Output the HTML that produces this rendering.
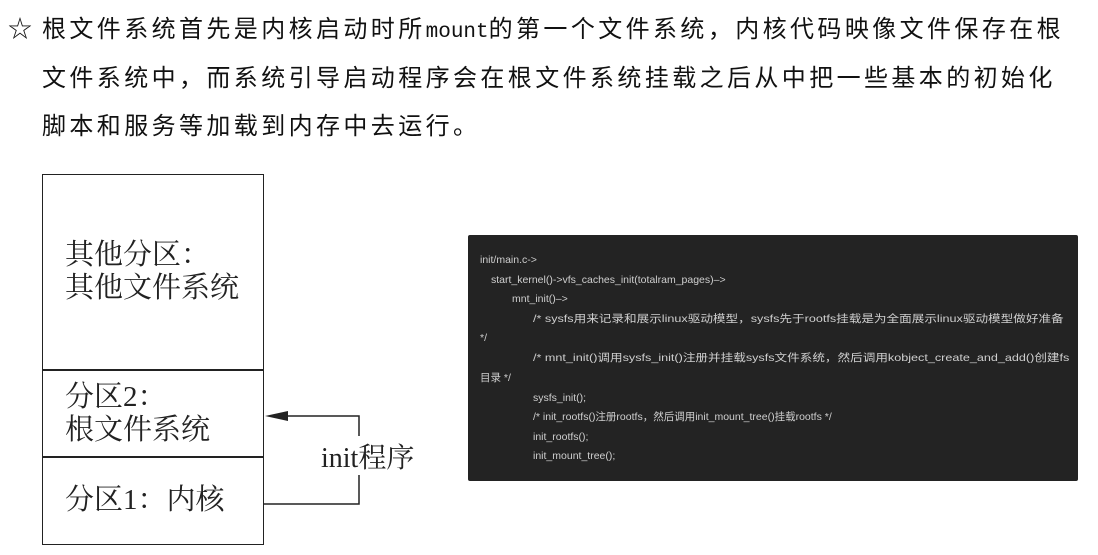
<!DOCTYPE html>
<html><head><meta charset="utf-8"><style>
body{margin:0;width:1098px;height:555px;background:#fff;position:relative;overflow:hidden;font-family:"Liberation Sans","Noto Sans CJK SC",sans-serif}
.t{position:absolute;left:42px;font-size:24px;letter-spacing:3.4px;color:#111;white-space:nowrap;line-height:30px}
.m{font-family:"Liberation Mono","DejaVu Sans Mono",monospace;letter-spacing:0;font-size:21px}
.s{position:absolute;font-family:"Liberation Serif","Noto Serif CJK SC",serif;font-size:29px;color:#222;white-space:nowrap;line-height:33px}
.code{position:absolute;left:468px;top:235px;width:610px;height:246px;background:#232323;border-radius:2px}
.c{position:absolute;font-size:10.5px;color:#cfcfcf;white-space:nowrap;line-height:14px}
.w{transform:scaleX(1.2);transform-origin:0 0}
.ln{position:absolute;background:#222}
</style></head><body>
<div class="t" style="left:8px;top:15px">☆</div>
<div class="t" style="top:15px">根文件系统首先是内核启动时所<span class="m">mount</span>的第一个文件系统，内核代码映像文件保存在根</div>
<div class="t" style="top:64px">文件系统中，而系统引导启动程序会在根文件系统挂载之后从中把一些基本的初始化</div>
<div class="t" style="top:112px">脚本和服务等加载到内存中去运行。</div>

<div style="position:absolute;left:42px;top:174px;width:220px;height:369px;border:1.5px solid #222"></div>
<div class="ln" style="left:42px;top:369px;width:222px;height:1.5px"></div>
<div class="ln" style="left:42px;top:456px;width:222px;height:1.5px"></div>
<div class="s" style="left:65px;top:239px">其他分区：<br>其他文件系统</div>
<div class="s" style="left:65px;top:381px">分区2：<br>根文件系统</div>
<div class="s" style="left:65px;top:484px">分区1：内核</div>
<svg style="position:absolute;left:0;top:0" width="1098" height="555">
<polyline points="280,416 359,416 359,436" fill="none" stroke="#222" stroke-width="1.5"/>
<polyline points="359,475 359,504 264,504" fill="none" stroke="#222" stroke-width="1.5"/>
<polygon points="265,416 288,411 288,421" fill="#222"/>
</svg>
<div class="s" style="left:321px;top:442px;font-size:28px">init程序</div>

<div class="code">
<div class="c" style="left:12px;top:18px">init/main.c-&gt;</div>
<div class="c" style="left:23px;top:38px">start_kernel()-&gt;vfs_caches_init(totalram_pages)–&gt;</div>
<div class="c" style="left:44px;top:57px">mnt_init()–&gt;</div>
<div class="c w" style="left:65px;top:77px">/* sysfs用来记录和展示linux驱动模型，sysfs先于rootfs挂载是为全面展示linux驱动模型做好准备</div>
<div class="c" style="left:12px;top:96px">*/</div>
<div class="c w" style="left:65px;top:116px">/* mnt_init()调用sysfs_init()注册并挂载sysfs文件系统，然后调用kobject_create_and_add()创建fs</div>
<div class="c" style="left:12px;top:136px">目录 */</div>
<div class="c" style="left:65px;top:156px">sysfs_init();</div>
<div class="c" style="left:65px;top:175px">/* init_rootfs()注册rootfs，然后调用init_mount_tree()挂载rootfs */</div>
<div class="c" style="left:65px;top:195px">init_rootfs();</div>
<div class="c" style="left:65px;top:214px">init_mount_tree();</div>
</div>
</body></html>
